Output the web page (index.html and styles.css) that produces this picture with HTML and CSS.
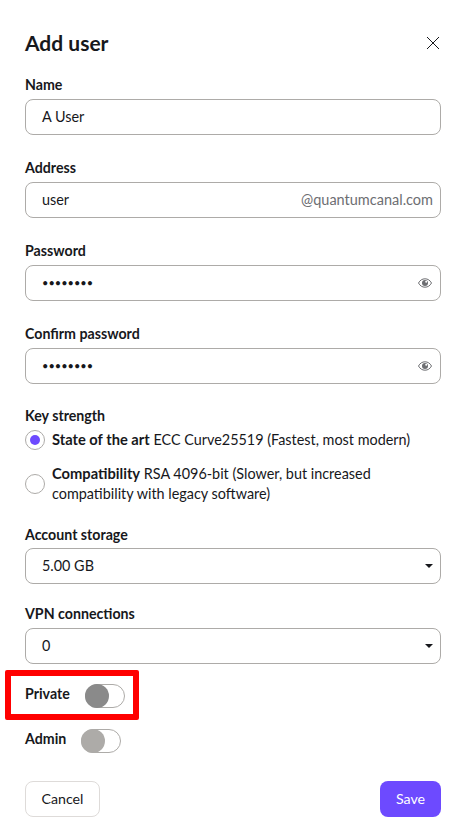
FILE: index.html
```html
<!DOCTYPE html>
<html lang="en">
<head>
<meta charset="utf-8">
<title>Add user</title>
<link rel="stylesheet" href="styles.css">
</head>
<body>
<form class="modal">
  <header class="head">
    <h1>Add user</h1>
    <svg class="close" viewBox="0 0 14 14" width="14" height="14"><path d="M1 1l12 12M13 1L1 13" fill="none" stroke="#17181c" stroke-width="1"/></svg>
  </header>

  <div class="field">
    <div class="label">Name</div>
    <div class="input"><span>A User</span></div>
  </div>
  <div class="field">
    <div class="label">Address</div>
    <div class="input"><span>user</span><span class="suffix">@quantumcanal.com</span></div>
  </div>
  <div class="field">
    <div class="label">Password</div>
    <div class="input"><span class="dots">••••••••</span>
      <svg class="eye" viewBox="0 0 16 16" width="16" height="16"><path d="M1.5 8C3 5.2 5.2 3.8 8 3.8S13 5.2 14.5 8C13 10.8 10.800 12.200 8 12.200S3 10.800 1.500 8Z" fill="none" stroke="#6d6e72" stroke-width="1"/><circle cx="8" cy="8" r="3" fill="#6d6e72"/><circle cx="9.200" cy="6.800" r="1" fill="#fff"/></svg>
    </div>
  </div>
  <div class="field">
    <div class="label">Confirm password</div>
    <div class="input"><span class="dots">••••••••</span>
      <svg class="eye" viewBox="0 0 16 16" width="16" height="16"><path d="M1.5 8C3 5.2 5.2 3.8 8 3.8S13 5.2 14.5 8C13 10.8 10.800 12.200 8 12.200S3 10.800 1.500 8Z" fill="none" stroke="#6d6e72" stroke-width="1"/><circle cx="8" cy="8" r="3" fill="#6d6e72"/><circle cx="9.200" cy="6.800" r="1" fill="#fff"/></svg>
    </div>
  </div>

  <div class="keys">
    <div class="label">Key strength</div>
    <div class="radio-row first">
      <span class="radio on"></span>
      <div><b>State of the art</b> ECC Curve25519 (Fastest, most modern)</div>
    </div>
    <div class="radio-row">
      <span class="radio"></span>
      <div><b>Compatibility</b> RSA 4096-bit (Slower, but increased compatibility with legacy software)</div>
    </div>
  </div>

  <div class="field storage">
    <div class="label">Account storage</div>
    <div class="input"><span>5.00 GB</span><span class="caret"></span></div>
  </div>
  <div class="field vpn">
    <div class="label">VPN connections</div>
    <div class="input"><span>0</span><span class="caret"></span></div>
  </div>

  <div class="toggle-row private">
    <span class="label">Private</span>
    <span class="toggle"><span class="knob dark"></span></span>
    <span class="highlight"></span>
  </div>
  <div class="toggle-row admin">
    <span class="label">Admin</span>
    <span class="toggle"><span class="knob"></span></span>
  </div>

  <footer class="foot">
    <div class="btn cancel">Cancel</div>
    <div class="btn save">Save</div>
  </footer>
</form>
</body>
</html>
```

FILE: styles.css
```css
* { box-sizing: border-box; }
html, body { margin: 0; padding: 0; background: #fff; }
body {
  width: 467px;
  height: 833px;
  overflow: hidden;
  font-family: "Lato", "Liberation Sans", sans-serif;
  font-size: 14.4px;
  line-height: 20px;
  color: #17181c;
}
.modal { padding: 0 26px 0 25px; }
.head {
  display: flex;
  align-items: center;
  justify-content: space-between;
  height: 30px;
  margin-top: 28px;
  margin-bottom: 17px;
}
.head h1 { margin: 0; font-size: 21px; font-weight: 700; line-height: 30px; }
.close { margin-right: 1px; }
.label { font-weight: 700; font-size: 14.2px; line-height: 20px; }
.field { margin-bottom: 23px; }
.field .label { margin-bottom: 4px; }
.input {
  position: relative;
  display: flex;
  align-items: center;
  justify-content: space-between;
  height: 36px;
  padding: 0 7px 0 16px;
  border: 1px solid #adaba8;
  border-radius: 8px;
}
.suffix { color: #6d6e72; font-size: 14.5px; }
.dots { font-size: 11px; }
.eye { flex: none; }
.keys { margin-top: -1px; }
.radio-row { display: flex; align-items: center; gap: 7px; padding: 2px 0; margin-top: 10px; }
.radio-row.first { margin-top: 2px; }
.radio {
  flex: none;
  width: 20px;
  height: 20px;
  border: 1px solid #adaba8;
  border-radius: 50%;
  display: flex;
  align-items: center;
  justify-content: center;
}
.radio.on::before { content: ""; width: 10px; height: 10px; border-radius: 50%; background: #6d4aff; }
.radio-row b { font-weight: 700; font-size: 14.7px; line-height: 1; }
.storage { margin-top: 19px; margin-bottom: 20px; }
.storage .label { margin-bottom: 3px; }
.vpn { margin-bottom: 0; }
.caret {
  width: 0;
  height: 0;
  border-left: 4px solid transparent;
  border-right: 4px solid transparent;
  border-top: 4px solid #17181c;
}
.toggle-row { position: relative; display: flex; align-items: center; height: 24px; gap: 15px; }
.toggle-row .label { padding-bottom: 4px; }
.private { margin-top: 20px; }
.admin { margin-top: 21px; }
.toggle {
  display: block;
  width: 40px;
  height: 24px;
  border: 1px solid #adaba8;
  border-radius: 12px;
  background: #fff;
  position: relative;
}
.knob {
  position: absolute;
  left: -1px;
  top: -1px;
  width: 24px;
  height: 24px;
  border-radius: 50%;
  background: #adaba8;
}
.knob.dark { background: #8a8a8a; }
.highlight {
  position: absolute;
  left: -20px;
  top: -14px;
  width: 134px;
  height: 50px;
  border: 6px solid #ff0000;
  border-radius: 2px;
}
.foot { display: flex; justify-content: space-between; margin-top: 28px; }
.btn {
  height: 36px;
  border-radius: 8px;
  display: flex;
  align-items: center;
  justify-content: center;
  font-size: 14.2px;
}
.cancel { width: 75px; border: 1px solid #dedbd9; }
.save { width: 61px; background: #6d4aff; color: #fff; }
```
